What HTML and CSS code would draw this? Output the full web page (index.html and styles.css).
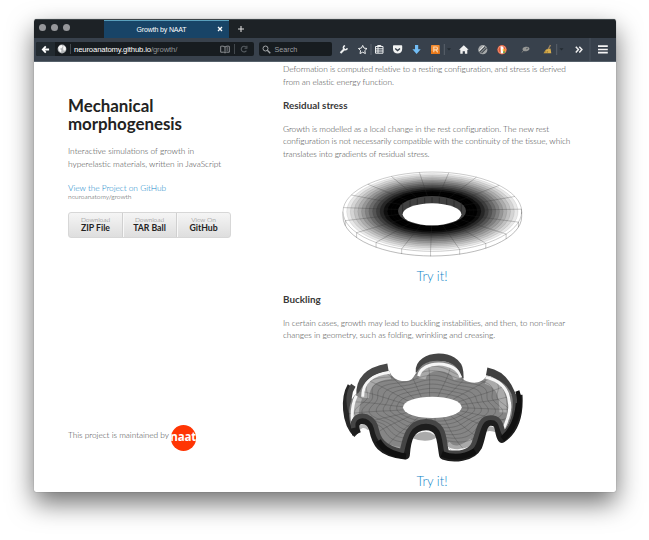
FILE: index.html
```html
<!DOCTYPE html>
<html lang="en">
<head>
<meta charset="utf-8">
<title>Growth by NAAT</title>
<link rel="stylesheet" href="styles.css">
</head>
<body>
<div class="window">
  <div class="tabbar">
    <div class="lights"><i></i><i></i><i></i></div>
    <div class="tab"><span>Growth by NAAT</span><svg class="close" viewBox="0 0 6 6"><path d="M1 1l4 4M5 1L1 5"/></svg></div>
    <svg class="plus" viewBox="0 0 8 8"><path d="M4 1v6M1 4h6"/></svg>
  </div>
  <div class="toolbar">
    <div class="url">
      <div class="back"><svg viewBox="0 0 10 10" width="9" height="9"><path d="M9 5H2.5M5.3 1.6L2 5l3.3 3.4" fill="none" stroke="#fff" stroke-width="2"/></svg></div>
      <svg class="globe" viewBox="0 0 10 10"><circle cx="5" cy="5" r="4.4" fill="#b4b7b9"/><path d="M1.200 3.500Q2 1.300 4.800 1l1 1.500-1.300 1.800-1.600.5 1.500 1.400-.4 2L2.200 7zM6.500 1.500l2 1.600.4 2.300-2 1.700-.8-2z" fill="#f8f8f8"/></svg>
      <i class="sep"></i>
      <span class="addr"><b>neuroanatomy.github.io</b>/growth/</span>
      <svg class="book" viewBox="0 0 10 9"><path d="M5 2C3.8 1 2 1 .7 1.3v5.9h3L5 8l1.3-.8h3V1.3C8 1 6.200 1 5 2zm0 0v5M6.500 3h1.500M6.500 5h1.500"/></svg>
      <i class="sep dim"></i>
      <svg class="reload" viewBox="0 0 8 8"><path d="M6.400 5.600A2.800 2.800 0 1 1 6 2.100M6.900.8v2.400H4.500"/></svg>
    </div>
    <div class="search"><svg viewBox="0 0 9 9" width="9" height="9"><path d="M5.300 5.300L8.300 8.300" stroke="#a4a7aa" stroke-width="1.300"/><circle cx="3.500" cy="3.500" r="2.500" fill="none" stroke="#a4a7aa"/></svg><span>Search</span></div>
    <svg class="icons" viewBox="332 38 283 23">
      <g fill="none" stroke="#eceeef">
        <path d="M340.500 53l4.200-4.200" stroke-width="2"/>
        <path d="M347.300 48.300a2 2 0 1 1-2.200-2.500" stroke-width="1.600"/>
        <path d="M362.700 45.400l1.300 2.700 3 .4-2.200 2.100.6 3-2.700-1.400-2.700 1.400.6-3-2.200-2.100 3-.4z"/>
        <path d="M375.500 46.500h7.500v6.700h-7.500zM377.600 46.300v-.8h3.300v.8M376 48.800h7M376 51h7M378 47v6"/>
      </g>
      <path d="M371 44v11" stroke="#5a626c"/>
      <path d="M393 46q0-.7.700-.7h7.800q.7 0 .7.700v3c0 6-9.200 6-9.200 0z" fill="#f2f3f3"/>
      <path d="M395.200 48.400l2.400 2.200 2.400-2.200" fill="none" stroke="#38414b" stroke-width="1.400"/>
      <path d="M415 45h3.200v4.300h2.500L416.600 54l-4.200-4.700h2.600z" fill="#72bdf5"/>
      <rect x="431" y="45" width="8.700" height="9" rx=".8" fill="#f28a2e"/><path d="M431 51h8.700v3H431z" fill="#e97818"/>
      <path d="M433.800 52.300v-5.300h2.200c2 0 2 2.800 0 2.800h-2m2 0l1.700 2.500" fill="none" stroke="#fbd3a9" stroke-width="1.200"/>
      <path d="M444.300 44v11M556.700 44v11" stroke="#5a626c"/>
      <path d="M447 48.300h4l-2 2.200zM559.500 48.300h4l-2 2.200z" fill="#222a31"/>
      <path d="M463.800 45.300l-4.800 4.500h1.300v4h2.400v-2.600h2.200v2.600h2.400v-4h1.300z" fill="#f0f0f0"/>
      <circle cx="482.800" cy="49.700" r="4.600" fill="#a6a9aa"/><path d="M479.500 52.500l5.800-5.800M481.500 53.200l5-5" stroke="#42494f" stroke-width="1.200"/><path d="M479.300 50.800l4.800-4.700" stroke="#fff" stroke-width=".8"/>
      <circle cx="502" cy="49.700" r="4.700" fill="#df5833"/><circle cx="502" cy="49.700" r="3.900" fill="none" stroke="#f4b29e" stroke-width=".6"/><path d="M500.500 46.400c3-.3 3.500 1.500 3 3.500l-.5 3.400h-2.200z" fill="#fff"/><path d="M502.500 49.400h3v1h-3z" fill="#fdd20a"/><path d="M503 51.500h2v1.400h-2z" fill="#66b84c"/>
      <ellipse cx="526" cy="49" rx="3.500" ry="2.200" fill="#969795" transform="rotate(-12 526 49)"/><path d="M526 49l2-1" stroke="#555b60"/><path d="M523 51l-1 1.500" stroke="#777"/>
      <path d="M550.500 45l-2.500 4.500" stroke="#9b8463" stroke-width="1.500"/><path d="M546 49.500l4.500-1 .8 4.800h-7.800z" fill="#d9ae4c"/><path d="M544.500 53l1.800-2M547 53l.8-2" stroke="#8c6a2b" stroke-width=".6"/>
      <path d="M575.800 46.800l2.600 2.800-2.600 2.800M579.300 46.800l2.600 2.800-2.600 2.800" fill="none" stroke="#eee" stroke-width="1.500"/>
      <path d="M590 38v23" stroke="#48535d"/>
      <path d="M598 46.200h9.800M598 49.500h9.800M598 52.700h9.800" stroke="#f4f4f4" stroke-width="1.700"/>
    </svg>
  </div>
  <div class="page">
    <aside>
      <h1>Mechanical<br>morphogenesis</h1>
      <p class="intro">Interactive simulations of growth in<br>hyperelastic materials, written in JavaScript</p>
      <p class="view"><a>View the Project on GitHub</a><small>neuroanatomy/growth</small></p>
      <ul><li>Download<strong>ZIP File</strong></li><li>Download<strong>TAR Ball</strong></li><li>View On<strong>GitHub</strong></li></ul>
      <footer><span>This project is maintained by</span><span class="naat"><b>naat</b></span></footer>
    </aside>
    <main>
      <p>Deformation is computed relative to a resting configuration, and stress is derived<br>from an elastic energy function.</p>
      <h3>Residual stress</h3>
      <p>Growth is modelled as a local change in the rest configuration. The new rest<br>configuration is not necessarily compatible with the continuity of the tissue, which<br>translates into gradients of residual stress.</p>
      <svg class="fig disk" id="disk" viewBox="0 0 630 285"></svg>
      <a class="try">Try it!</a>
      <h3 class="buck">Buckling</h3>
      <p>In certain cases, growth may lead to buckling instabilities, and then, to non-linear<br>changes in geometry, such as folding, wrinkling and creasing.</p>
      <svg class="fig ruffle" viewBox="0 0 630 360">
        <defs><clipPath id="c"><path id="surf" d="M78 150C98 150 90 92 178 80C185 105 210 114 235 110C262 106 256 50 322 50C388 50 388 90 402 108C430 122 455 118 470 96C525 108 540 135 550 165C560 210 545 240 520 268C505 225 470 215 452 255C435 290 435 330 385 330C345 330 345 240 288 235C240 235 235 330 205 330C145 315 145 240 100 220C80 225 72 225 62 245C52 200 60 165 78 150z"/></clipPath></defs>
        <g fill="none">
          <path d="M62 126C42 160 42 235 80 272" stroke="#262626" stroke-width="20"/>
          <path d="M70 124C52 150 56 180 64 205" stroke="#444" stroke-width="16"/>
          <path d="M91 156C88 108 115 80 174 70" stroke="#484848" stroke-width="24"/>
          <path d="M268 84C262 28 385 22 389 84L390 104" stroke="#444" stroke-width="22"/>
          <path d="M470 82C520 91 545 130 556 195" stroke="#3f3f3f" stroke-width="24"/>
        </g>
        <use href="#surf" fill="#858585"/>
        <g clip-path="url(#c)">
          <g fill="none" stroke="#a9a9a9" stroke-width="22"><path d="M106 162C107 120 132 99 182 94M276 104C282 58 372 58 382 106M468 109C505 122 520 142 519 205M86 160Q74 190 74 230M122 235C142 295 160 314 208 320M350 300Q378 335 428 292"/></g>
          <g id="mesh" fill="none" stroke="#333" stroke-opacity=".5" stroke-width="1.500"></g>
          <g fill="none" stroke="#f5f5f5" stroke-width="9"><path d="M98 158C98 112 127 91 180 85M266 96C276 47 377 47 393 100M466 99C515 110 535 138 538 175Q545 205 517 262M79 155Q62 190 68 238M124 250C147 311 167 317 212 324M347 310Q378 330 423 311"/></g>
        </g>
        <ellipse cx="307" cy="190" rx="88" ry="32" fill="#fff"/>
        <path d="M245 282Q280 235 322 280Q290 300 245 282z" fill="#aaa"/><path d="M252 270Q287 248 317 270" fill="none" stroke="#f6f6f6" stroke-width="9"/>
        <path d="M455 257Q480 235 505 260L500 266Q475 255 453 270z" fill="#aaa"/>
        <path d="M80 262Q95 235 118 254" fill="none" stroke="#bbb" stroke-width="12"/>
        <g fill="none" stroke-linejoin="round">
          <path d="M80 270C55 214 123 214 131 257C138 294 150 325 226 333C229 290 238 245 288 245C338 245 333 295 341 334C370 344 425 341 443 307C457 275 454 232 482 232C516 232 503 265 516 283C550 260 568 220 564 153" stroke="#1d1d1d" stroke-width="27"/>
          <path d="M70 252C62 205 125 203 138 250C145 285 158 310 216 322C224 285 233 232 288 232C349 232 341 295 350 324C385 331 421 325 432 297C445 265 446 221 482 221C518 221 511 255 524 272C550 240 560 205 553 150" stroke="#454545" stroke-width="14"/>
          <path d="M145 290Q165 329 228 337M335 330Q388 350 435 321M517 285Q560 250 566 178" stroke="#101010" stroke-width="17"/>
          <path d="M562 141Q572 165 565 205" stroke="#111" stroke-width="13"/>
        </g>
      </svg>
      <a class="try last">Try it!</a>
    </main>
  </div>
</div>
<script src="figures.js"></script>
</body>
</html>
```
FILE: styles.css
```css
* { box-sizing: border-box; margin: 0; padding: 0; }
body { width: 649px; height: 540px; padding: 19px 0 0 34px; background: #fff; overflow: hidden; font-family: Lato, sans-serif; }
.window { width: 581.5px; height: 473px; display: flex; flex-direction: column; border-radius: 3px 3px 2px 2px; overflow: hidden; background: #fff; box-shadow: 0 0 1px rgba(0,0,0,.5), 0 11px 26px rgba(0,0,0,.57); }
.tabbar { height: 19px; background: #1d2226; border-top: 1px solid #3d4447; display: flex; flex: none; }
.lights { display: flex; gap: 5px; width: 70px; padding: 4px 0 0 4.500px; }
.lights i { width: 7px; height: 7px; border-radius: 50%; background: #96979a; }
.tab { width: 125px; background: #184467; border-top: 1px solid #5aa0bd; display: flex; align-items: center; justify-content: center; color: #fff; font: 7px "Liberation Sans", sans-serif; letter-spacing: -.15px; position: relative; padding-right: 10px; }
.close { position: absolute; right: 6px; top: 5px; width: 6px; height: 6px; fill: none; stroke: #fff; stroke-width: 1.300; }
.plus { width: 8px; height: 8px; margin: 5px 0 0 8px; fill: none; stroke: #ddd; stroke-width: 1.100; }
.toolbar { height: 23.500px; background: #38414c; border-bottom: 1px solid #56616b; display: flex; align-items: center; flex: none; font-family: "Liberation Sans", sans-serif; }
.url { width: 218px; height: 14px; margin-left: 2px; border-radius: 2px; background: #171c20; display: flex; align-items: center; overflow: hidden; flex: none; }
.back { width: 19px; height: 14px; background: #222a30; display: flex; align-items: center; justify-content: center; }
.globe { width: 10px; height: 10px; margin-left: 2px; }
.sep { width: 1px; height: 10px; margin: 0 3px; background: #42484d; }
.addr { font-size: 7.700px; color: #8f9396; width: 145.500px; white-space: nowrap; letter-spacing: -.13px; }
.addr b { font-weight: 400; color: #fff; }
.book { width: 10px; height: 9px; fill: none; stroke: #9a9da0; stroke-width: .9; flex: none; }
.dim { margin: 0 5px 0 4px; }
.reload { width: 8px; height: 8px; fill: none; stroke: #555b60; stroke-width: 1.100; }
.search { width: 73px; height: 14px; margin-left: 5px; background: #171c20; border-radius: 2px; display: flex; align-items: center; padding-left: 3px; gap: 3.500px; color: #9b9ea1; font-size: 7.200px; flex: none; }
.icons { width: 283px; height: 23px; flex: none; }
.page { flex: 1; min-height: 0; display: flex; color: #444; font-weight: 300; font-size: 8.330px; line-height: 12.500px; }
aside { width: 248px; padding: 35px 0 0 34px; flex: none; margin-right: 1px; white-space: nowrap; display: flex; flex-direction: column; }
h1 { color: #222; font-size: 16.900px; line-height: 18.700px; font-weight: 700; letter-spacing: -.03px; }
.intro { margin-top: 11.500px; }
.view { margin-top: 12.500px; }
.view a { display: block; line-height: 11px; letter-spacing: -.04px; }
a { color: #1085c8; }
small { display: block; font-size: 6.600px; line-height: 6px; margin-top: -1px; }
ul { display: flex; list-style: none; width: 163px; height: 26px; margin-top: 13px; border: 1px solid #d7d7d7; border-radius: 3px; background: linear-gradient(#f5f5f5, #dedede); text-align: center; }
li { flex: 1; font-size: 6.600px; line-height: 7px; padding-top: 3px; color: #777; }
li + li { border-left: 1px solid #d0d0d0; box-shadow: inset 1px 0 #f8f8f8; }
li strong { display: block; font-size: 8.700px; line-height: 9px; color: #222; font-weight: 700; }
footer { display: flex; margin-top: auto; height: 67px; align-items: flex-start; }
footer > span:first-child { padding-top: 4px; width: 102.500px; letter-spacing: -.04px; }
.naat { width: 25.500px; height: 25.500px; border-radius: 50%; background: #ff3504; overflow: hidden; display: flex; align-items: center; justify-content: center; }
.naat b { color: #fff; font: 700 11.600px/24px "Open Sans", sans-serif; letter-spacing: -.2px; margin-top: -1px; }
main { width: 298px; padding-top: 1.800px; display: flex; flex-direction: column; }
main > p { white-space: nowrap; letter-spacing: -.07px; }
h3 { color: #393939; font-size: 9.850px; line-height: 12px; font-weight: 700; margin: 10.800px 0 11.700px; }
h3.buck { margin: 8px 0 11.300px; }
.fig { width: 210px; margin-left: 47px; flex: none; }
.disk { height: 95px; margin-top: 5px; }
.ruffle { height: 120px; margin-top: 2px; }
.try { width: 298px; text-align: center; font-size: 13px; line-height: 18px; margin-top: 7px; }
.try.last { margin-top: 8px; }
```
FILE: figures.js
```javascript
const NS = 'http://www.w3.org/2000/svg';
function add(parent, tag, attrs) {
  const e = document.createElementNS(NS, tag);
  for (const k in attrs) e.setAttribute(k, attrs[k]);
  parent.appendChild(e);
}

// Flat disk with its stress gradient
const disk = document.getElementById('disk');
const line = { fill: 'none', stroke: '#777', 'stroke-width': 1.5 };
add(disk, 'path', { ...line, fill: '#fff', d: 'M39 140V155A268 118 0 0 0 575 155V140' });
const shades = [255, 232, 212, 192, 172, 150, 128, 106, 84, 62, 38, 14, 0, 0, 0];
shades.forEach((v, i) => {
  const t = i / shades.length;
  add(disk, 'ellipse', { cx: 307, cy: 140 - t * 2, rx: 268 - t * 166, ry: 119 - t * 74,
    fill: `rgb(${v},${v},${v})`, stroke: i ? 'rgba(50,50,50,.2)' : '#888', 'stroke-width': 1.3 });
});
for (let i = 0; i < 19; i++) {
  const a = i / 19 * Math.PI * 2 + Math.PI / 2 + .02;
  const c = Math.cos(a), s = Math.sin(a);
  add(disk, 'path', { ...line, stroke: 'rgba(45,45,45,.5)', d: `M${307 + 102 * c} ${138 + 45 * s}L${307 + 268 * c} ${140 + 119 * s}${s > -.1 ? 'v15' : ''}` });
}
add(disk, 'ellipse', { cx: 306, cy: 138, rx: 102, ry: 45, fill: '#404040' });
for (let i = -4; i < 5; i++) add(disk, 'path', { d: `M${306 + i * 22} ${97 + i * i}v30`, stroke: '#222', 'stroke-width': 2 });
add(disk, 'ellipse', { cx: 306, cy: 148, rx: 88, ry: 33, fill: '#fff' });

// Grid of the ruffled surface
const mesh = document.getElementById('mesh');
function at(a, t) {
  const w = 1 + .1 * t * Math.cos(7 * (a + Math.PI / 2));
  return [307 + (88 + 150 * t) * Math.cos(a) * w, 190 + (32 + 88 * t) * Math.sin(a) * w - 6 * t];
}
for (let k = 1; k < 8; k++) {
  let d = '';
  for (let i = 0; i <= 180; i++) d += (i ? 'L' : 'M') + at(i * Math.PI / 90, k / 8).join(' ');
  add(mesh, 'path', { d });
}
for (let i = 0; i < 22; i++) {
  const a = i * Math.PI / 11 + .05;
  let d = '';
  for (let k = 0; k <= 12; k++) d += (k ? 'L' : 'M') + at(a + .05 * Math.sin(k / 4), k / 9).join(' ');
  add(mesh, 'path', { d });
}
```
